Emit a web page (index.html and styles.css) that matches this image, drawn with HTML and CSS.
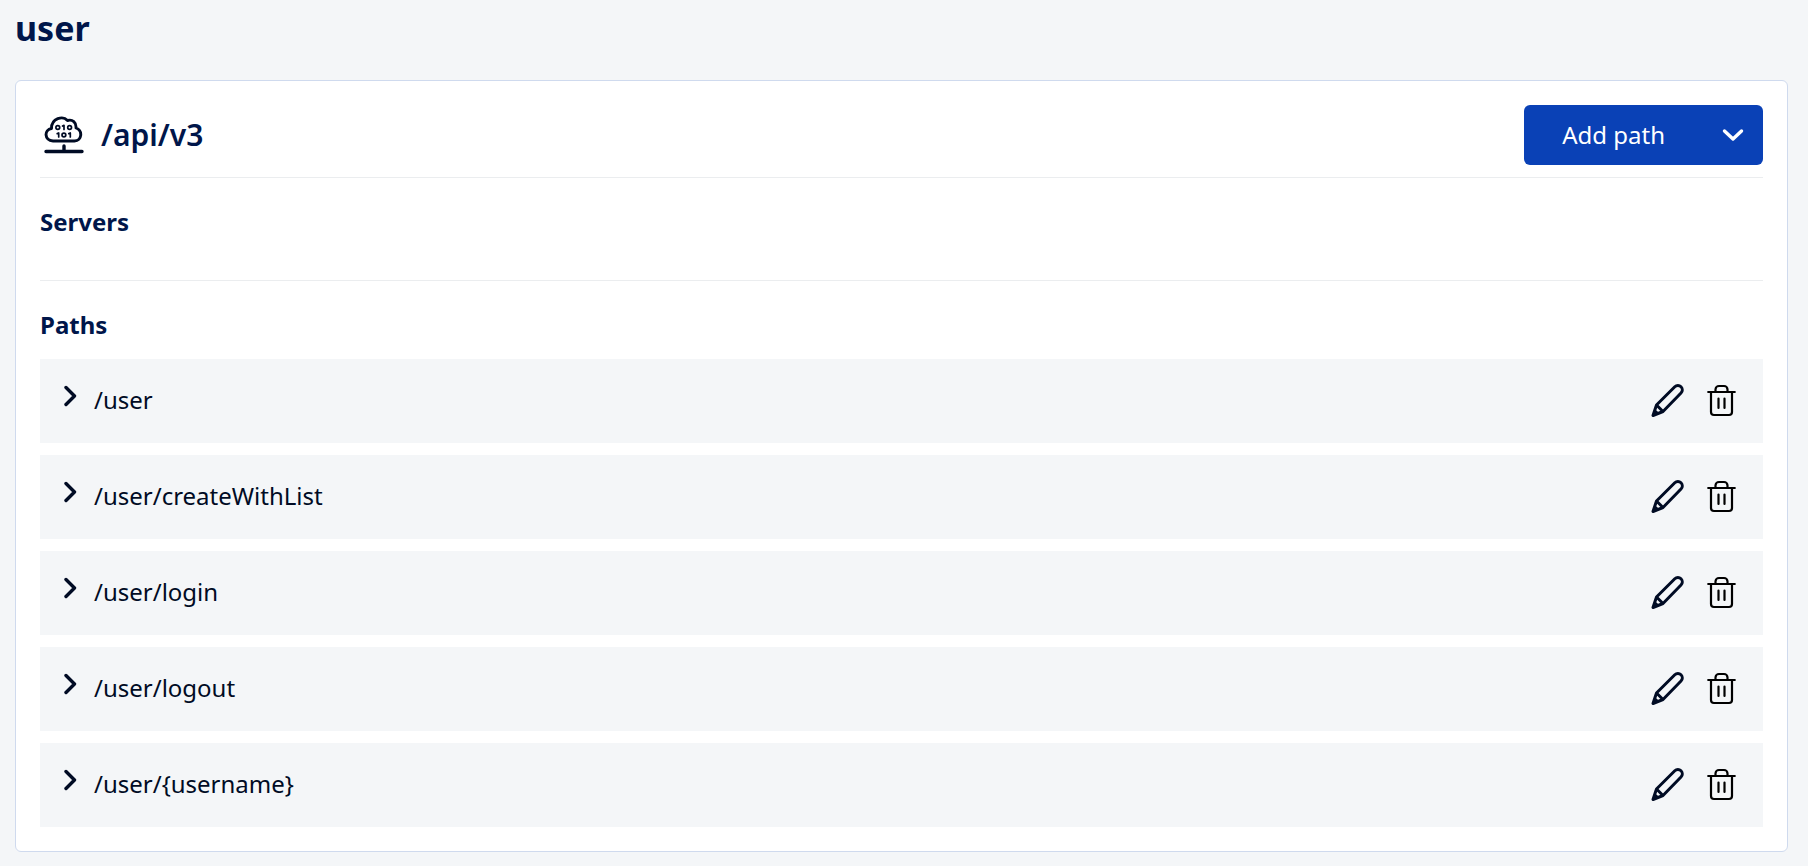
FILE: index.html
```html
<!DOCTYPE html>
<html lang="en">
<head>
    <meta charset="UTF-8">
    <meta name="viewport" content="width=device-width, initial-scale=1.0">
    <title>user</title>
    <link rel="stylesheet" href="styles.css">
</head>
<body>
    <!-- shared icons -->
    <svg class="sprite" aria-hidden="true">
        <symbol id="chevron" viewBox="0 0 14 22">
            <path d="M2 2.500L10.500 11 2 19.500" fill="none" stroke="currentColor" stroke-width="3.400" stroke-linecap="round" stroke-linejoin="round"/>
        </symbol>
        <symbol id="pencil" viewBox="0 0 34 34">
            <path d="M2 31.500L5.500 21 23.800 2.800a4.300 4.300 0 0 1 6.200 6.200L12 27.500zM5.500 21l6.500 6.500M4 27l2.500 2.500" fill="none" stroke="currentColor" stroke-width="3" stroke-linecap="round" stroke-linejoin="round"/>
        </symbol>
        <symbol id="trash" viewBox="0 0 34 34">
            <path d="M3.200 8h26.600M6 8v20a3 3 0 0 0 3 3h15a3 3 0 0 0 3-3V8M10.500 8V5.500a3.500 3.500 0 0 1 3.500-3.500h5a3.500 3.500 0 0 1 3.500 3.500V8M13.500 14.500V24M19.500 14.500V24" fill="none" stroke="currentColor" stroke-width="2.200" stroke-linecap="round" stroke-linejoin="round"/>
        </symbol>
    </svg>

    <h1>user</h1>

    <main class="card">
        <header class="card-header">
            <svg class="api-icon" viewBox="0 0 40 40" fill="none" stroke="currentColor" stroke-linecap="round" stroke-linejoin="round" aria-hidden="true">
                <path d="M9 26C0 25.500 0 14.500 7.500 13.500 7.500 3 19 .5 23.500 5.500c5-1.500 9 2 8.500 7.500 7 2.500 6 13-1.500 13z" stroke-width="2.900"/>
                <path d="M20 31v5M2 36.500h36" stroke-width="3.400"/>
                <g stroke-width="1.700">
                    <ellipse cx="13.800" cy="12.500" rx="1.900" ry="1.900"/>
                    <path d="M18.500 11l1.500-.6v4"/>
                    <ellipse cx="25.600" cy="12.500" rx="1.900" ry="1.900"/>
                    <path d="M13.200 18.600l1.500-.6v4"/>
                    <ellipse cx="19.900" cy="20" rx="1.900" ry="1.900"/>
                    <path d="M24.800 18.600l1.500-.6v4"/>
                </g>
            </svg>
            <h2>/api/v3</h2>
            <div class="split-button">
                <button class="add-path" type="button">Add path</button>
                <button class="add-more" type="button" aria-label="More options">
                    <svg viewBox="0 0 22 14" aria-hidden="true">
                        <path d="M2.500 3L11 11l8.500-8" fill="none" stroke="currentColor" stroke-width="3.400" stroke-linecap="round" stroke-linejoin="round"/>
                    </svg>
                </button>
            </div>
        </header>

        <section class="servers">
            <h3>Servers</h3>
        </section>

        <section class="paths">
            <h3>Paths</h3>
            <ul class="path-list">
                <li class="path">
                    <button class="path-toggle" type="button" aria-expanded="false"><svg aria-hidden="true"><use href="#chevron"/></svg>/user</button>
                    <button class="icon-button" type="button" aria-label="Edit"><svg><use href="#pencil"/></svg></button>
                    <button class="icon-button delete" type="button" aria-label="Delete"><svg><use href="#trash"/></svg></button>
                </li>
                <li class="path">
                    <button class="path-toggle" type="button" aria-expanded="false"><svg aria-hidden="true"><use href="#chevron"/></svg>/user/createWithList</button>
                    <button class="icon-button" type="button" aria-label="Edit"><svg><use href="#pencil"/></svg></button>
                    <button class="icon-button delete" type="button" aria-label="Delete"><svg><use href="#trash"/></svg></button>
                </li>
                <li class="path">
                    <button class="path-toggle" type="button" aria-expanded="false"><svg aria-hidden="true"><use href="#chevron"/></svg>/user/login</button>
                    <button class="icon-button" type="button" aria-label="Edit"><svg><use href="#pencil"/></svg></button>
                    <button class="icon-button delete" type="button" aria-label="Delete"><svg><use href="#trash"/></svg></button>
                </li>
                <li class="path">
                    <button class="path-toggle" type="button" aria-expanded="false"><svg aria-hidden="true"><use href="#chevron"/></svg>/user/logout</button>
                    <button class="icon-button" type="button" aria-label="Edit"><svg><use href="#pencil"/></svg></button>
                    <button class="icon-button delete" type="button" aria-label="Delete"><svg><use href="#trash"/></svg></button>
                </li>
                <li class="path">
                    <button class="path-toggle" type="button" aria-expanded="false"><svg aria-hidden="true"><use href="#chevron"/></svg>/user/{username}</button>
                    <button class="icon-button" type="button" aria-label="Edit"><svg><use href="#pencil"/></svg></button>
                    <button class="icon-button delete" type="button" aria-label="Delete"><svg><use href="#trash"/></svg></button>
                </li>
            </ul>
        </section>
    </main>
</body>
</html>
```
FILE: styles.css
```css
* {
    box-sizing: border-box;
}

body {
    margin: 0;
    padding: 6px 20px 14px 15px;
    font-family: "Noto Sans", sans-serif;
    font-size: 24px;
    line-height: 32px;
    color: #000b24;
    background-color: #f4f6f8;
}

h1, h2, h3 {
    margin: 0;
    font-weight: 700;
    color: #00164a;
}

h1 {
    margin-bottom: 30px;
    font-size: 34px;
    line-height: 44px;
}

h2 {
    flex: 1;
    font-size: 30px;
    line-height: 40px;
    font-weight: 600;
}

h3 {
    font-size: 24px;
    line-height: 32px;
}

button {
    padding: 0;
    border: 0;
    background: none;
    color: inherit;
    font: inherit;
    cursor: pointer;
}

svg {
    display: block;
}

.sprite {
    display: none;
}

.card {
    padding: 24px;
    border: 1px solid #cfdaee;
    border-radius: 6px;
    background-color: #fff;
}

.card-header {
    display: flex;
    align-items: center;
    padding-bottom: 12px;
    border-bottom: 1px solid #ebedef;
}

.api-icon {
    width: 40px;
    height: 40px;
    margin: 0 17px 0 4px;
}

.split-button {
    display: flex;
    height: 60px;
    border-radius: 6px;
    overflow: hidden;
    color: #fff;
    background-color: #0a41b6;
}

.add-path {
    padding: 0 38px;
}

.add-more {
    padding: 0 19px;
}

.add-more svg {
    width: 22px;
    height: 14px;
}

.servers {
    padding: 28px 0 42px;
    border-bottom: 1px solid #ebedef;
}

.paths {
    padding-top: 28px;
}

.path-list {
    display: flex;
    flex-direction: column;
    gap: 12px;
    margin: 18px 0 0;
    padding: 0;
    list-style: none;
}

.path {
    display: flex;
    align-items: center;
    gap: 20px;
    padding: 0 24px;
    background-color: #f4f6f8;
}

.path-toggle {
    display: flex;
    flex: 1;
    gap: 16px;
    padding: 25px 0 27px;
    text-align: left;
}

.path-toggle svg {
    width: 14px;
    height: 24px;
}

.icon-button svg {
    width: 34px;
    height: 34px;
}

.delete {
    color: #000;
}
```
